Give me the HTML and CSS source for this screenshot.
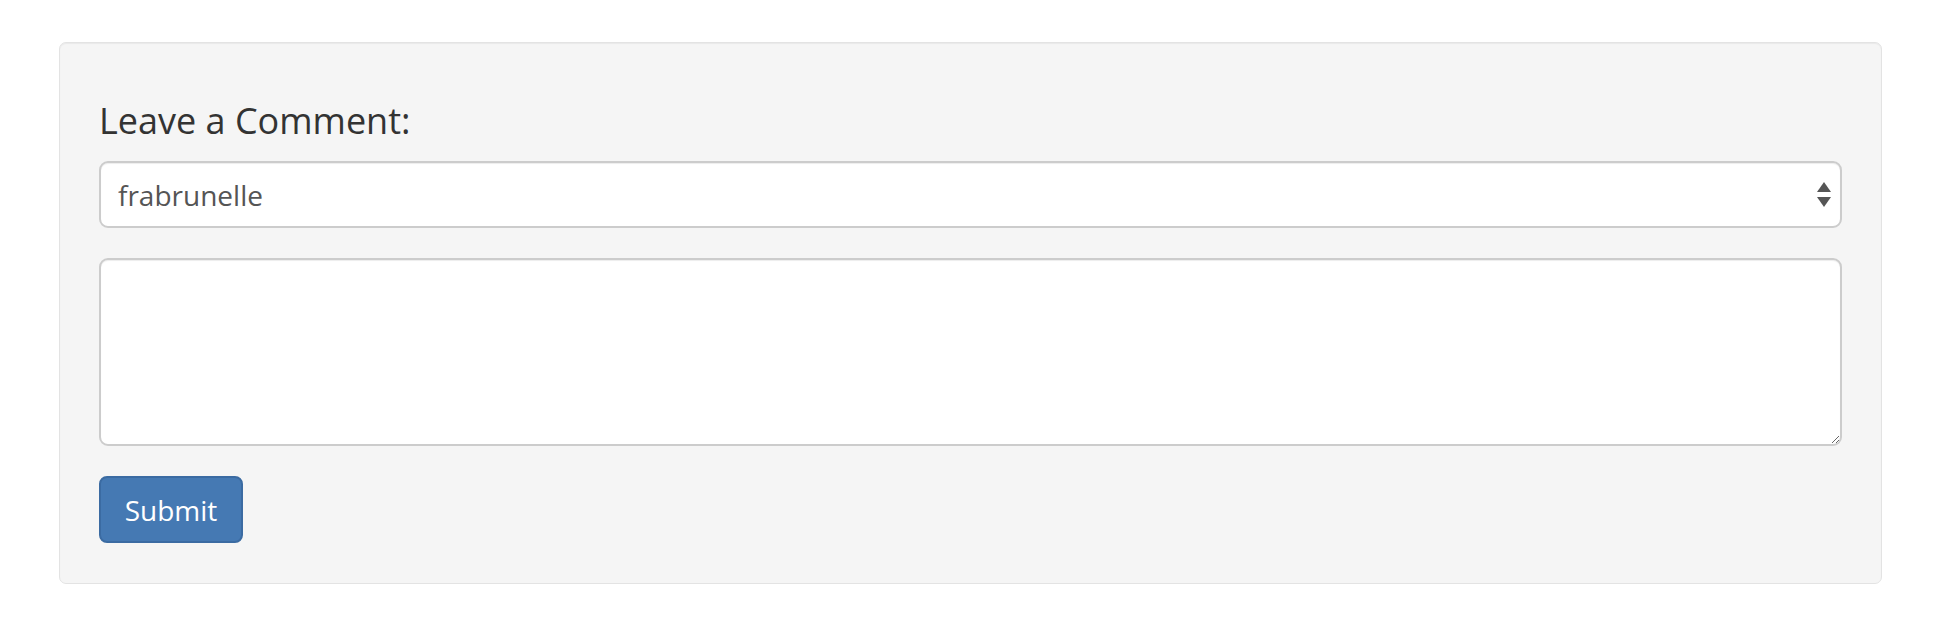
FILE: index.html
```html
<!DOCTYPE html>
<html>
<head>
<meta charset="utf-8">
<link rel="stylesheet" href="styles.css">
</head>
<body>
<div class="page">
  <form class="well">
    <label class="title">Leave a Comment:</label>
    <div class="select-wrap">
      <select class="field select">
        <option>frabrunelle</option>
      </select>
      <svg class="arrows" width="14" height="26" viewBox="0 0 14 26">
        <polygon points="7,0 14,10 0,10" fill="#555"/>
        <polygon points="0,15 14,15 7,25" fill="#555"/>
      </svg>
    </div>
    <textarea class="field textarea"></textarea>
    <div class="actions">
      <button type="button" class="btn">Submit</button>
    </div>
  </form>
</div>
</body>
</html>
```
FILE: styles.css
```css
html, body {
  margin: 0;
  padding: 0;
  background: #ffffff;
}
body {
  font-family: "Open Sans", "Liberation Sans", sans-serif;
  color: #333333;
}
.page {
  padding: 42px 52px 0 59px;
}
.well {
  display: flex;
  flex-direction: column;
  box-sizing: border-box;
  height: 542px;
  padding: 58px 39px 40px 39px;
  background: #f5f5f5;
  border: 1px solid #e3e3e3;
  border-radius: 7px;
  box-shadow: inset 0 1px 1px rgba(0,0,0,0.05);
  margin: 0;
}
.title {
  display: block;
  font-size: 36px;
  line-height: 39px;
  height: 39px;
  margin-bottom: 21px;
  color: #333;
  font-weight: 400;
}
.select-wrap {
  position: relative;
  height: 67px;
}
.field {
  box-sizing: border-box;
  width: 100%;
  background: #ffffff;
  border: 2px solid #cccccc;
  border-radius: 9px;
  box-shadow: inset 0 1px 1px rgba(0,0,0,0.075);
  font-family: "Open Sans", "Liberation Sans", sans-serif;
  color: #555555;
  outline: none;
  margin: 0;
}
.select {
  -webkit-appearance: none;
  appearance: none;
  height: 67px;
  padding: 0 50px 0 17px;
  font-size: 28px;
}
.arrows {
  position: absolute;
  right: 11px;
  top: 21px;
  pointer-events: none;
}
.textarea {
  display: block;
  height: 188px;
  margin-top: 30px;
  padding: 12px 17px;
  font-size: 28px;
  resize: vertical;
}
.actions {
  margin-top: 30px;
  display: flex;
}
.btn {
  box-sizing: border-box;
  width: 144px;
  height: 67px;
  padding: 0;
  background: #4579b3;
  border: 2px solid #3b6ba2;
  border-radius: 8px;
  color: #ffffff;
  font-family: "Open Sans", "Liberation Sans", sans-serif;
  font-size: 28px;
  line-height: 1;
  cursor: pointer;
}
```
